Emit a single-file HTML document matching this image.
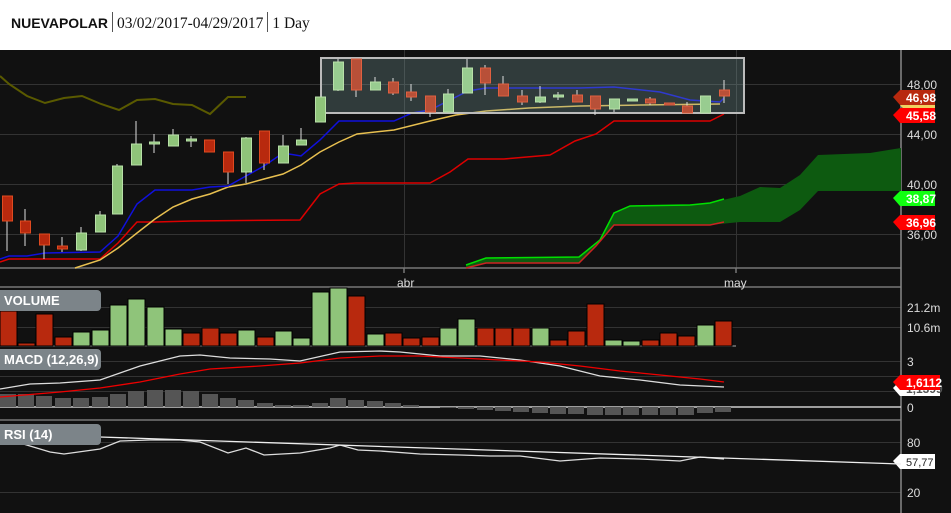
<!DOCTYPE html>
<html><head><meta charset="utf-8"><style>
body{margin:0;width:951px;height:513px;overflow:hidden;background:#fff;font-family:"Liberation Sans",sans-serif}
#hdr{position:absolute;left:11px;top:12px;font-size:14px;color:#111;white-space:nowrap}
#hdr b{font-family:"Liberation Sans",sans-serif;font-weight:bold}
#hdr span{font-family:"Liberation Serif",serif;font-size:15.5px}
.sep{display:inline-block;width:1px;height:20px;background:#555;vertical-align:-4px;margin:0 4px}
svg{position:absolute;left:0;top:50px}
</style></head><body>
<div id="hdr"><b>NUEVAPOLAR</b><i class="sep"></i><span>03/02/2017-04/29/2017</span><i class="sep"></i><span>1 Day</span></div>
<svg width="951" height="463" viewBox="0 50 951 463" xmlns="http://www.w3.org/2000/svg" font-family="Liberation Sans, sans-serif">
<rect x="0" y="50" width="951" height="463" fill="#111"/>
<g stroke="#333" stroke-width="1">
<line x1="0" y1="84.5" x2="901" y2="84.5"/><line x1="0" y1="134.5" x2="901" y2="134.5"/><line x1="0" y1="184.5" x2="901" y2="184.5"/><line x1="0" y1="234.5" x2="901" y2="234.5"/>
<line x1="0" y1="307.5" x2="901" y2="307.5"/><line x1="0" y1="327.5" x2="901" y2="327.5"/>
<line x1="0" y1="361.5" x2="901" y2="361.5"/><line x1="0" y1="376.5" x2="901" y2="376.5"/><line x1="0" y1="391.5" x2="901" y2="391.5"/>
<line x1="0" y1="442.5" x2="901" y2="442.5"/><line x1="0" y1="492.5" x2="901" y2="492.5"/>
<line x1="404.5" y1="50" x2="404.5" y2="268"/><line x1="736.5" y1="50" x2="736.5" y2="268"/>
</g>
<g stroke="#777" stroke-width="1.5">
<line x1="0" y1="268" x2="901" y2="268"/><line x1="0" y1="287" x2="901" y2="287"/><line x1="0" y1="346" x2="736" y2="346"/>
<line x1="0" y1="420" x2="901" y2="420"/><line x1="901" y1="50" x2="901" y2="513" stroke="#888"/>
<line x1="404" y1="268" x2="404" y2="273"/><line x1="736" y1="268" x2="736" y2="273"/>
</g>
<line x1="0" y1="407" x2="901" y2="407" stroke="#ccc" stroke-width="1.5"/>
<g fill="#ddd" font-size="12">
<text x="397" y="287">abr</text><text x="724" y="287">may</text>
<text x="907" y="89">48,00</text><text x="907" y="139">44,00</text><text x="907" y="189">40,00</text><text x="907" y="239">36,00</text>
<text x="907" y="312">21.2m</text><text x="907" y="332">10.6m</text>
<text x="907" y="366">3</text><text x="907" y="412">0</text>
<text x="907" y="447">80</text><text x="907" y="497">20</text>
</g>
<polygon fill="#0d5a10" points="466,265 486,258 579,257 600,240 614,213 630,206 690,205 710,203 740,196 760,187 780,188 800,175 818,155 870,153 901,148 901,191 818,191 800,210 780,222 740,222 710,225 614,225 596,246 579,263 486,263 466,268"/>
<polyline fill="none" stroke="#00e000" stroke-width="1.5" points="466,265 486,258 579,257 600,240 614,213 630,206 690,205 710,203 724,199"/>
<polyline fill="none" stroke="#c22" stroke-width="1.5" points="466,268 486,263 579,263 596,246 614,225 710,225 724,222"/>
<polyline fill="none" stroke="#5a5a00" stroke-width="2" points="0,76 9,84 27,96 45,103 64,98 82,96 101,104 119,110 137,100 155,99 173,104 192,105 210,114 228,97 246,97"/>
<polyline fill="none" stroke="#d00" stroke-width="1.5" points="0,262 9,259 100,259 118,243 137,222 155,222 192,221 300,220 320,194 339,184 356,183 430,183 450,172 468,159 504,159 550,155 575,141 596,134 614,121 710,121 724,114"/>
<polyline fill="none" stroke="#e8c050" stroke-width="1.5" points="75,268 100,260 118,248 137,233 155,219 173,207 192,199 210,194 228,187 246,184 264,179 283,174 301,165 320,152 339,142 357,134 394,130 430,121 456,115 486,111 529,108 580,106 640,105 720,104"/>
<polyline fill="none" stroke="#1010dd" stroke-width="1.5" points="0,259 9,256 27,256 45,253 100,252 118,236 137,204 155,190 192,190 210,187 228,186 246,176 264,166 283,153 301,156 320,140 339,121 356,121 394,121 412,113 430,110 468,91 486,88 579,88 614,87 660,92 690,100 720,102 724,98"/>
<rect x="321" y="58" width="423" height="55" fill="rgba(130,170,170,0.28)" stroke="#bbb" stroke-width="2"/>
<g stroke-width="1">
<g stroke="#ddd">
<line x1="7" y1="196" x2="7" y2="251"/><line x1="25" y1="209" x2="25" y2="246"/><line x1="44" y1="234" x2="44" y2="259"/><line x1="62" y1="237" x2="62" y2="252"/><line x1="81" y1="227" x2="81" y2="251"/><line x1="100" y1="211" x2="100" y2="232"/><line x1="117" y1="164" x2="117" y2="214"/><line x1="136" y1="121" x2="136" y2="165"/><line x1="154" y1="134" x2="154" y2="153"/><line x1="173" y1="129" x2="173" y2="146"/><line x1="191" y1="136" x2="191" y2="147"/><line x1="228" y1="152" x2="228" y2="184"/><line x1="246" y1="137" x2="246" y2="183"/><line x1="264" y1="131" x2="264" y2="170"/><line x1="283" y1="135" x2="283" y2="163"/><line x1="301" y1="128" x2="301" y2="145"/>
<line x1="338" y1="59" x2="338" y2="91"/><line x1="356" y1="59" x2="356" y2="97"/><line x1="375" y1="77" x2="375" y2="90"/><line x1="393" y1="78" x2="393" y2="95"/><line x1="411" y1="84" x2="411" y2="101"/><line x1="430" y1="96" x2="430" y2="117"/><line x1="448" y1="89" x2="448" y2="112"/><line x1="467" y1="59" x2="467" y2="93"/><line x1="485" y1="65" x2="485" y2="95"/><line x1="503" y1="76" x2="503" y2="96"/><line x1="522" y1="90" x2="522" y2="105"/><line x1="540" y1="86" x2="540" y2="103"/><line x1="558" y1="92" x2="558" y2="100"/><line x1="577" y1="90" x2="577" y2="102"/><line x1="595" y1="96" x2="595" y2="115"/><line x1="614" y1="99" x2="614" y2="112"/><line x1="650" y1="97" x2="650" y2="105"/><line x1="687" y1="102" x2="687" y2="113"/><line x1="724" y1="80" x2="724" y2="103"/>
</g>
<g fill="#b8290e" stroke="#e04a20">
<rect x="2.5" y="196" width="10" height="25"/><rect x="20.5" y="221" width="10" height="12"/><rect x="39.5" y="234" width="10" height="11"/><rect x="57.5" y="246" width="10" height="3"/><rect x="204.5" y="140" width="10" height="12"/><rect x="223.5" y="152" width="10" height="20"/><rect x="259.5" y="131" width="10" height="32"/>
</g>
<g fill="#8fc47a" stroke="#b8e0a8">
<rect x="76.5" y="233" width="10" height="17"/><rect x="95.5" y="215" width="10" height="17"/><rect x="112.5" y="166" width="10" height="48"/><rect x="131.5" y="144" width="10" height="21"/><rect x="149.5" y="142" width="10" height="2"/><rect x="168.5" y="135" width="10" height="11"/><rect x="186.5" y="139" width="10" height="2"/><rect x="241.5" y="138" width="10" height="34"/><rect x="278.5" y="146" width="10" height="17"/><rect x="296.5" y="140" width="10" height="5"/><rect x="315.5" y="97" width="10" height="25"/>
<rect x="333.5" y="62" width="10" height="28" fill="#98cc90"/><rect x="370.5" y="82" width="10" height="8" fill="#98cc90"/><rect x="443.5" y="94" width="10" height="18" fill="#98cc90"/><rect x="462.5" y="68" width="10" height="25" fill="#98cc90"/><rect x="535.5" y="97" width="10" height="5" fill="#98cc90"/><rect x="553.5" y="95" width="10" height="2" fill="#98cc90"/><rect x="609.5" y="99" width="10" height="10" fill="#98cc90"/><rect x="627.5" y="99" width="10" height="2" fill="#98cc90"/><rect x="700.5" y="96" width="10" height="17" fill="#98cc90"/>
</g>
<g fill="#b85038" stroke="#e06040">
<rect x="351.5" y="59" width="10" height="31"/><rect x="388.5" y="82" width="10" height="11"/><rect x="406.5" y="92" width="10" height="5"/><rect x="425.5" y="96" width="10" height="16"/><rect x="480.5" y="68" width="10" height="15"/><rect x="498.5" y="84" width="10" height="12"/><rect x="517.5" y="96" width="10" height="6"/><rect x="572.5" y="95" width="10" height="7"/><rect x="590.5" y="96" width="10" height="13"/><rect x="645.5" y="99" width="10" height="4"/><rect x="664.5" y="103" width="10" height="2"/><rect x="682.5" y="106" width="10" height="7"/><rect x="719.5" y="90" width="10" height="6"/>
</g>
</g>
<g font-size="12" font-weight="bold" fill="#fff">
<path d="M900,105 l6,-7 h29 v14 h-29z" fill="#f0d060"/>
<path d="M893,97 l7,-7 h35 v15 h-35z" fill="#b8290e"/><text x="906" y="102">46,98</text>
<path d="M893,115 l7,-7 h35 v15 h-35z" fill="#f00"/><text x="906" y="120">45,58</text>
<path d="M893,198 l7,-7 h35 v15 h-35z" fill="#1f1"/><text x="906" y="203">38,87</text>
<path d="M893,222 l7,-7 h35 v15 h-35z" fill="#f00"/><text x="906" y="227">36,96</text>
<path d="M893,388 l7,-7 h40 v15 h-40z" fill="#fff"/><text x="906" y="393" fill="#555">1,1399</text>
<path d="M893,382 l7,-7 h40 v15 h-40z" fill="#f00"/><text x="906" y="387">1,6112</text>
<path d="M893,461 l7,-7 h35 v15 h-35z" fill="#fff"/><text x="906" y="466" fill="#222" font-weight="normal" font-size="11">57,77</text>
</g>
<g stroke="#000" stroke-width="1">
<rect x="0" y="311" width="17" height="35" fill="#b8290e"/><rect x="18" y="343" width="17" height="3" fill="#b8290e"/><rect x="36" y="314" width="17" height="32" fill="#b8290e"/><rect x="55" y="337" width="17" height="9" fill="#b8290e"/><rect x="73" y="332" width="17" height="14" fill="#8fc47a"/><rect x="92" y="330" width="17" height="16" fill="#8fc47a"/><rect x="110" y="305" width="17" height="41" fill="#8fc47a"/><rect x="128" y="299" width="17" height="47" fill="#8fc47a"/><rect x="147" y="307" width="17" height="39" fill="#8fc47a"/><rect x="165" y="329" width="17" height="17" fill="#8fc47a"/><rect x="183" y="333" width="17" height="13" fill="#b8290e"/><rect x="202" y="328" width="17" height="18" fill="#b8290e"/><rect x="220" y="333" width="17" height="13" fill="#b8290e"/><rect x="238" y="330" width="17" height="16" fill="#8fc47a"/><rect x="257" y="337" width="17" height="9" fill="#b8290e"/><rect x="275" y="331" width="17" height="15" fill="#8fc47a"/><rect x="293" y="338" width="17" height="8" fill="#8fc47a"/><rect x="312" y="292" width="17" height="54" fill="#8fc47a"/><rect x="330" y="288" width="17" height="58" fill="#8fc47a"/><rect x="348" y="296" width="17" height="50" fill="#b8290e"/><rect x="367" y="334" width="17" height="12" fill="#8fc47a"/><rect x="385" y="333" width="17" height="13" fill="#b8290e"/><rect x="403" y="338" width="17" height="8" fill="#b8290e"/><rect x="422" y="337" width="17" height="9" fill="#b8290e"/><rect x="440" y="328" width="17" height="18" fill="#8fc47a"/><rect x="458" y="319" width="17" height="27" fill="#8fc47a"/><rect x="477" y="328" width="17" height="18" fill="#b8290e"/><rect x="495" y="328" width="17" height="18" fill="#b8290e"/><rect x="513" y="328" width="17" height="18" fill="#b8290e"/><rect x="532" y="328" width="17" height="18" fill="#8fc47a"/><rect x="550" y="340" width="17" height="6" fill="#b8290e"/><rect x="568" y="331" width="17" height="15" fill="#b8290e"/><rect x="587" y="304" width="17" height="42" fill="#b8290e"/><rect x="605" y="340" width="17" height="6" fill="#8fc47a"/><rect x="623" y="341" width="17" height="5" fill="#8fc47a"/><rect x="642" y="340" width="17" height="6" fill="#b8290e"/><rect x="660" y="333" width="17" height="13" fill="#b8290e"/><rect x="678" y="336" width="17" height="10" fill="#b8290e"/><rect x="697" y="325" width="17" height="21" fill="#8fc47a"/><rect x="715" y="321" width="17" height="25" fill="#b8290e"/>
</g>
<g fill="#555">
<rect x="0" y="394" width="16" height="13"/><rect x="18" y="394" width="16" height="13"/><rect x="36" y="396" width="16" height="11"/><rect x="55" y="398" width="16" height="9"/><rect x="73" y="398" width="16" height="9"/><rect x="92" y="397" width="16" height="10"/><rect x="110" y="394" width="16" height="13"/><rect x="128" y="391" width="16" height="16"/><rect x="147" y="390" width="16" height="17"/><rect x="165" y="390" width="16" height="17"/><rect x="183" y="391" width="16" height="16"/><rect x="202" y="394" width="16" height="13"/><rect x="220" y="398" width="16" height="9"/><rect x="238" y="400" width="16" height="7"/><rect x="257" y="403" width="16" height="4"/><rect x="275" y="405" width="16" height="2"/><rect x="293" y="405" width="16" height="2"/><rect x="312" y="403" width="16" height="4"/><rect x="330" y="398" width="16" height="9"/><rect x="348" y="400" width="16" height="7"/><rect x="367" y="401" width="16" height="6"/><rect x="385" y="403" width="16" height="4"/><rect x="403" y="405" width="16" height="2"/>
<rect x="440" y="407" width="16" height="1"/><rect x="458" y="407" width="16" height="2"/><rect x="477" y="407" width="16" height="3"/><rect x="495" y="407" width="16" height="4"/><rect x="513" y="407" width="16" height="5"/><rect x="532" y="407" width="16" height="6"/><rect x="550" y="407" width="16" height="7"/><rect x="568" y="407" width="16" height="7"/><rect x="587" y="407" width="16" height="8"/><rect x="605" y="407" width="16" height="8"/><rect x="623" y="407" width="16" height="8"/><rect x="642" y="407" width="16" height="8"/><rect x="660" y="407" width="16" height="8"/><rect x="678" y="407" width="16" height="8"/><rect x="697" y="407" width="16" height="6"/><rect x="715" y="407" width="16" height="5"/>
</g>
<polyline fill="none" stroke="#ddd" stroke-width="1.3" points="0,389 30,384 60,383 100,380 140,366 180,356 200,355 230,358 270,359 300,361 340,352 380,351 400,352 440,356 480,356 520,360 560,366 600,376 640,380 680,385 724,387"/>
<polyline fill="none" stroke="#e00" stroke-width="1.3" points="0,397 60,392 100,388 140,382 180,374 210,369 260,366 300,363 340,358 380,356 420,356 460,358 500,360 540,362 580,366 620,371 660,375 700,379 724,382"/>
<polyline fill="none" stroke="#ddd" stroke-width="1.3" points="0,437 30,446 50,452 64,454 100,449 120,441 150,440 180,440 200,442 228,453 246,448 264,455 300,453 330,448 340,445 358,450 380,451 420,454 460,455 490,456 520,456 560,461 600,458 640,459 680,461 700,457 724,459"/>
<line x1="100" y1="437" x2="901" y2="464" stroke="#eee" stroke-width="1.3"/>
<g fill="#7c8489">
<rect x="-6" y="290" width="107" height="21" rx="4"/><rect x="-6" y="349" width="107" height="21" rx="4"/><rect x="-6" y="424" width="107" height="21" rx="4"/>
</g>
<g fill="#fff" font-size="13" font-weight="bold">
<text x="4" y="305">VOLUME</text><text x="4" y="364">MACD (12,26,9)</text><text x="4" y="439">RSI (14)</text>
</g>
</svg>
</body></html>
